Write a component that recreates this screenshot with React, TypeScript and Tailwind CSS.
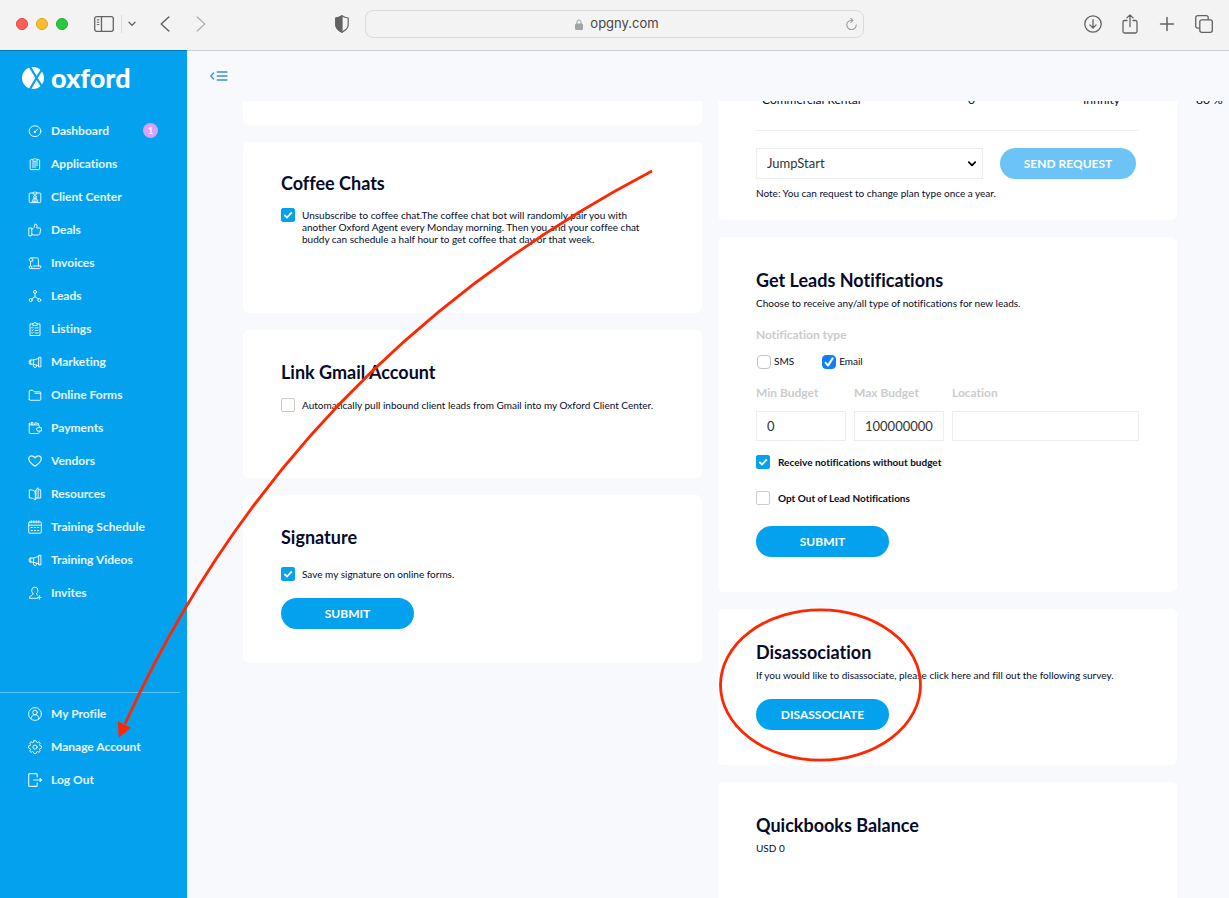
import type { ReactNode } from "react";

const navItems: { label: string; icon: ReactNode; badge?: number }[] = [
  {
    label: "Dashboard",
    badge: 1,
    icon: (
      <>
        <ellipse cx="7" cy="7.2" rx="5.9" ry="5.4" />
        <path d="M6.9 8 9.6 5.2" />
        <circle cx="6.8" cy="7.9" r=".7" fill="currentColor" />
      </>
    ),
  },
  {
    label: "Applications",
    icon: (
      <>
        <path d="M4.6 2.6H3.2a1 1 0 0 0-1 1v8a1 1 0 0 0 1 1h7.4a1 1 0 0 0 1-1v-8a1 1 0 0 0-1-1H9.4" />
        <path d="M4.8 3.9V2.3h1.1a1.1 1.1 0 0 1 2.1 0h1.2v1.6z" />
        <path d="M4.3 6h5.4M4.3 8h5.4M4.3 10h3.6" />
      </>
    ),
  },
  {
    label: "Client Center",
    icon: (
      <>
        <path d="M5 3H2.2a1 1 0 0 0-1 1v7.6a1 1 0 0 0 1 1h9.6a1 1 0 0 0 1-1V4a1 1 0 0 0-1-1H9" />
        <path d="M5.2 3.8V2.4h.9a1 1 0 0 1 1.8 0h.9v1.4z" />
        <circle cx="7" cy="6.9" r="1.4" />
        <path d="M4.2 11.3c.1-1.8 1.2-2.8 2.8-2.8s2.700 1 2.800 2.800zM5.600 10h2.800" />
      </>
    ),
  },
  {
    label: "Deals",
    icon: (
      <>
        <path d="M1.200 5h2.600v7.800H1.200z" />
        <path d="M3.800 6.200c2-.6 3-2.400 3-5 1.500-.3 2.300.6 2.200 1.900L8.700 5h2.700c.9 0 1.500.7 1.300 1.600l-.9 4.100c-.2.9-.8 1.300-1.600 1.300H5.600l-1.800-.8" />
      </>
    ),
  },
  {
    label: "Invoices",
    icon: (
      <>
        <path d="M2.300 5.500a1.800 1.800 0 1 1 2.500-1.700v1.300H2.500v4.700" />
        <path d="M3.500 1.900h5.300c1 0 1.600.7 1.600 1.600V10" />
        <path d="M5 10h7.800v1c0 .9-.7 1.600-1.600 1.600H2.700A1.400 1.400 0 0 1 1.200 11c0-.8.6-1.300 1.300-1.300S3.800 10.200 3.800 11v1.500" />
      </>
    ),
  },
  {
    label: "Leads",
    icon: (
      <>
        <circle cx="7" cy="2.900" r="1.500" />
        <circle cx="2.700" cy="11.100" r="1.500" />
        <circle cx="11.300" cy="11.100" r="1.500" />
        <path d="M7 4.400v3.300M3.700 9.900 7 7.700l3.300 2.200" />
      </>
    ),
  },
  {
    label: "Listings",
    icon: (
      <>
        <path d="M5 1.900H2v11.600h10V1.900H9" />
        <path d="M4.800 3.100V1.500h1.100a1.100 1.100 0 0 1 2.200 0h1.100v1.600z" />
        <path d="m3.700 5.600.6.6 1-1.100M3.700 8.100l.6.6 1-1.100M3.700 10.700l.6.600 1-1.100M7.200 5.900h2.900M7.200 8.400h2.900M7.200 11h2.900" />
      </>
    ),
  },
  { label: "Marketing", icon: <Megaphone /> },
  {
    label: "Online Forms",
    icon: <path d="M1.200 11.300V3.200c0-.5.4-.9.900-.9h2.700l1.500 1.500h5.600c.5 0 .9.400.9.900v6.600c0 .6-.4 1-.9 1H2.100a.9.900 0 0 1-.9-1zM7 5.300h5.600" />,
  },
  {
    label: "Payments",
    icon: (
      <>
        <path d="M11.200 6V4.800a.9.900 0 0 0-.9-.9H2.100a.9.900 0 0 1 0-1.900M1.200 3v8.500c0 .6.400 1 .9 1h8.200c.5 0 .9-.4.9-1v-1" />
        <path d="M3.300 3.700V1.500h1.500v2.200M6.500 3.700l.7-2 3.300.9.200 1.100" />
        <path d="M12.900 6.600h-2.600a1.700 1.700 0 0 0 0 3.500h2.600z" />
      </>
    ),
  },
  {
    label: "Vendors",
    icon: <path strokeWidth="1.200" d="M7 12.300C3.500 9.900.7 7.700.7 4.800c0-1.800 1.400-3 3-3 1.400 0 2.500.8 3.300 2 .8-1.200 1.900-2 3.300-2 1.600 0 3 1.200 3 3 0 2.900-2.800 5.100-6.300 7.500z" />,
  },
  {
    label: "Resources",
    icon: (
      <>
        <path d="M7 12.600C5.400 11.300 3.600 11 1.300 11V2.800c2.300 0 4.100.4 5.700 1.700zM7 12.600l3-1.800M7 4.500l.9-.7" />
        <path d="M8 8.900V2.600L10.200.8v8.800L8 11M11.200 2.800h1.500V11h-2.500" />
      </>
    ),
  },
  {
    label: "Training Schedule",
    icon: (
      <>
        <rect x=".7" y="2" width="12.600" height="11.200" rx=".8" />
        <path d="M.7 5.200h12.600" />
        <path d="M3.300.7v2.200M5.800.7v2.200M8.200.7v2.200M10.700.7v2.200" />
        <path strokeLinecap="butt" strokeDasharray="2.200 1" d="M2.700 7.500h8.600M2.700 10.500h8.600" />
      </>
    ),
  },
  { label: "Training Videos", icon: <Megaphone /> },
  {
    label: "Invites",
    icon: (
      <>
        <path d="M5 7.500C3.900 6.500 3.700 5.300 3.700 4.300a3.100 3.100 0 0 1 6.200 0c0 1-.2 2.200-1.300 3.200" />
        <path d="M5 7.500c.1 1.500-1 1.800-2 2.200-1 .4-1.500 1.300-1.500 2.600h7.800M8.600 7.500c0 .9.400 1.400 1.100 1.700" />
        <path d="M11.300 9.600v3.600M9.500 11.400h3.600" />
      </>
    ),
  },
];

const accountItems: { label: string; icon: ReactNode }[] = [
  {
    label: "My Profile",
    icon: (
      <>
        <circle cx="7" cy="7" r="6.400" />
        <circle cx="7" cy="5.500" r="2.300" />
        <path d="M3 11.900c.1-2.600 1.600-4.100 4-4.100s3.900 1.500 4 4.100" />
      </>
    ),
  },
  {
    label: "Manage Account",
    icon: (
      <>
        <path d="M5.900.7h2.200l.4 1.500 1 .4 1.400-.8 1.400 1.400-.8 1.400.4 1 1.500.4v2.200l-1.500.4-.4 1 .8 1.400-1.400 1.400-1.400-.8-1 .4-.4 1.500H5.900l-.4-1.500-1-.4-1.400.8-1.400-1.400.8-1.400-.4-1L.6 8.200V6l1.500-.4.4-1-.8-1.400 1.400-1.400 1.400.8 1-.4z" />
        <circle cx="7" cy="7.100" r="2.100" />
      </>
    ),
  },
  {
    label: "Log Out",
    icon: <path strokeWidth="1.100" d="M9.200 4V1.600a1 1 0 0 0-1-1H1.700a1 1 0 0 0-1 1v10.800a1 1 0 0 0 1 1h6.500a1 1 0 0 0 1-1V10M5.500 7h8M12 5.500 13.600 7 12 8.500" />,
  },
];

function Megaphone() {
  return (
    <>
      <path d="M11 2.300h1.900v9.600H11z" />
      <path d="M11 3.300 5.600 5H2.200c-.6 0-1 .4-1 1v2.200c0 .6.400 1 1 1h3.400L11 10.900M5.600 5v4.200M2.700 5v4.200" />
      <path d="M5.400 9.300l.4 2.300c.1.600.6.900 1.200.8l.9-.2c.5-.1.700-.5.600-1l-.2-1.100" />
    </>
  );
}

function NavList({ items }: { items: { label: string; icon: ReactNode; badge?: number }[] }) {
  return (
    <ul>
      {items.map((item) => (
        <li key={item.label}>
          <a href="#" className="flex h-[33px] items-center pl-7 text-xs font-bold text-white/90">
            <svg viewBox="0 0 14 14" className="mr-[9px] size-3.5 overflow-visible" fill="none" stroke="currentColor" strokeWidth="1" strokeLinecap="round" strokeLinejoin="round">
              {item.icon}
            </svg>
            {item.label}
            {item.badge && (
              <span className="mr-[29px] ml-auto flex size-[15px] items-center justify-center rounded-full bg-[#dba2fb] text-[9px] font-bold text-white/90">
                {item.badge}
              </span>
            )}
          </a>
        </li>
      ))}
    </ul>
  );
}

function Tick({ id, label, checked = false, bold = false, gap = "gap-[7px]" }: { id: string; label: string; checked?: boolean; bold?: boolean; gap?: string }) {
  return (
    <div className={`flex items-start ${gap}`}>
      <span className="grid size-3.5 shrink-0">
        <input
          id={id}
          type="checkbox"
          defaultChecked={checked}
          className="peer col-start-1 row-start-1 size-3.5 appearance-none rounded-xs border border-[#cbcbcb] bg-white checked:border-[#04a2ee] checked:bg-[#04a2ee]"
        />
        <svg viewBox="0 0 14 14" className="pointer-events-none col-start-1 row-start-1 hidden size-3.5 peer-checked:block" fill="none" stroke="white" strokeWidth="1.800">
          <path d="M3.300 7 6 9.500l4.800-5.200" />
        </svg>
      </span>
      <label htmlFor={id} className={bold ? "pt-px text-[10px] leading-3 font-bold" : "pt-px text-[10px] leading-3"}>
        {label}
      </label>
    </div>
  );
}

function SystemTick({ id, label, checked = false }: { id: string; label: string; checked?: boolean }) {
  return (
    <div className="flex items-start gap-[3px]">
      <span className="grid size-3.5 shrink-0">
        <input
          id={id}
          type="checkbox"
          defaultChecked={checked}
          className="peer col-start-1 row-start-1 size-3.5 appearance-none rounded-[4px] border border-[#c4c4c4] bg-white checked:border-[#0f7dff] checked:bg-[#0f7dff]"
        />
        <svg viewBox="0 0 14 14" className="pointer-events-none col-start-1 row-start-1 hidden size-3.5 peer-checked:block" fill="none" stroke="white" strokeWidth="2" strokeLinecap="round" strokeLinejoin="round">
          <path d="M3.500 7.700 6 10.600l4.600-7.200" />
        </svg>
      </span>
      <label htmlFor={id} className="text-[10px] leading-3">{label}</label>
    </div>
  );
}

function PillButton({ children }: { children: ReactNode }) {
  return (
    <button type="button" className="block h-[31px] w-[133px] rounded-full bg-[#04a2ee] text-xs font-bold text-white">
      {children}
    </button>
  );
}

function Heading({ children }: { children: ReactNode }) {
  return <h2 className="text-lg leading-6 font-bold">{children}</h2>;
}

function Toolbar() {
  return (
    <header className="flex h-[50px] shrink-0 items-center bg-[#f3f3f3] pb-0.5 text-[#636363]">
      <div className="flex w-[365px] shrink-0 items-center pl-4">
        <div className="flex gap-2">
          <button type="button" aria-label="Close" className="size-3 rounded-full border border-[#e0443e] bg-[#ff5f57]" />
          <button type="button" aria-label="Minimize" className="size-3 rounded-full border border-[#dfa023] bg-[#febc2e]" />
          <button type="button" aria-label="Zoom" className="size-3 rounded-full border border-[#1dad2b] bg-[#28c840]" />
        </div>
        <button type="button" aria-label="Sidebar" className="ml-[26px]">
          <svg viewBox="0 0 20 16" className="h-4 w-5" fill="none" stroke="currentColor" strokeWidth="1.300">
            <rect x=".7" y=".7" width="18.600" height="14.600" rx="2" />
            <path d="M7.500.7v14.600" />
            <path strokeWidth="1" d="M2.800 3.800h2.600M2.800 6.200h2.600M2.800 8.600h2.600" />
          </svg>
        </button>
        <span className="ml-[7px] h-[18px] w-px bg-[#dedede]" />
        <button type="button" aria-label="Tab groups" className="ml-1.5">
          <svg viewBox="0 0 8 6" className="h-1.5 w-2" fill="none" stroke="currentColor" strokeWidth="1.300" strokeLinecap="round" strokeLinejoin="round">
            <path d="M1 1.200 4 4.400l3-3.200" />
          </svg>
        </button>
        <button type="button" aria-label="Back" className="ml-6">
          <svg viewBox="0 0 10 16" className="h-4 w-2.5" fill="none" stroke="currentColor" strokeWidth="1.500" strokeLinecap="round" strokeLinejoin="round">
            <path d="M8.800 1 1.200 8l7.600 7" />
          </svg>
        </button>
        <button type="button" aria-label="Forward" className="ml-[26px] text-[#b4b4b4]">
          <svg viewBox="0 0 10 16" className="h-4 w-2.5" fill="none" stroke="currentColor" strokeWidth="1.500" strokeLinecap="round" strokeLinejoin="round">
            <path d="M1.200 1l7.600 7-7.600 7" />
          </svg>
        </button>
        <button type="button" aria-label="Privacy report" className="mr-4 ml-auto">
          <svg viewBox="0 0 14 18" className="h-[18px] w-3.5" fill="none" stroke="currentColor" strokeWidth="1.200" strokeLinejoin="round">
            <path d="M7 .8c1.800 1.300 3.700 2 6.200 2.200v6.500c0 3.600-2.600 5.900-6.200 7.700C3.400 15.400.8 13.100.8 9.500V3C3.300 2.800 5.200 2.100 7 .8z" />
            <path fill="currentColor" d="M7 .8v16.400C3.400 15.400.8 13.100.8 9.500V3C3.300 2.800 5.200 2.100 7 .8z" />
          </svg>
        </button>
      </div>
      <div className="flex h-7 min-w-0 flex-1 items-center rounded-lg border border-[#dadada] px-1.5">
        <div className="flex flex-1 items-center justify-center gap-[7px] pl-4">
          <svg viewBox="0 0 8 11" className="h-[11px] w-2 text-[#a3a3a3]" fill="none" stroke="currentColor">
            <path d="M2 5V3a2 2 0 0 1 4 0v2" />
            <rect x=".5" y="5" width="7" height="5.500" rx=".6" fill="currentColor" />
          </svg>
          <span className="font-[Inter,sans-serif] text-[13px] text-[#474747]">opgny.com</span>
        </div>
        <button type="button" aria-label="Reload" className="text-[#9b9b9b]">
          <svg viewBox="0 0 11 12" className="h-3 w-[11px]" fill="none" stroke="currentColor" strokeWidth="1.100" strokeLinecap="round" strokeLinejoin="round">
            <path d="M10.200 6.700A4.700 4.700 0 1 1 5.500 2.300h1M4.900.5l2 1.900-2 1.900" />
          </svg>
        </button>
      </div>
      <div className="flex w-[365px] shrink-0 items-center justify-end gap-[19px] pr-4">
        <button type="button" aria-label="Downloads">
          <svg viewBox="0 0 18 18" className="size-[18px]" fill="none" stroke="currentColor" strokeWidth="1.300" strokeLinecap="round" strokeLinejoin="round">
            <circle cx="9" cy="9" r="8.200" />
            <path d="M9 4.700v8M5.900 9.900 9 13l3.100-3.100" />
          </svg>
        </button>
        <button type="button" aria-label="Share">
          <svg viewBox="0 0 18 20" className="h-5 w-[18px]" fill="none" stroke="currentColor" strokeWidth="1.300" strokeLinecap="round" strokeLinejoin="round">
            <path d="M6 6.500H3.500a1.500 1.500 0 0 0-1.500 1.500v9.500A1.500 1.500 0 0 0 3.500 19h11a1.500 1.500 0 0 0 1.500-1.500V8a1.500 1.500 0 0 0-1.500-1.500H12M9 12.500V1M5.900 3.900 9 .9l3.100 3" />
          </svg>
        </button>
        <button type="button" aria-label="New tab">
          <svg viewBox="0 0 18 18" className="size-[18px]" fill="none" stroke="currentColor" strokeWidth="1.500" strokeLinecap="round">
            <path d="M9 2.500v13M2.500 9h13" />
          </svg>
        </button>
        <button type="button" aria-label="Tab overview">
          <svg viewBox="0 0 18 18" className="size-[18px]" fill="none" stroke="currentColor" strokeWidth="1.300" strokeLinejoin="round">
            <rect x="4.800" y="4.800" width="12.500" height="12.500" rx="2" />
            <path d="M4.800 13.200H2.700a2 2 0 0 1-2-2V2.700a2 2 0 0 1 2-2h8.500a2 2 0 0 1 2 2v2.100" />
          </svg>
        </button>
      </div>
    </header>
  );
}

function Sidebar() {
  return (
    <aside className="flex w-[187px] shrink-0 flex-col border-t border-[#0479b8] bg-[#04a2ee]">
      <a href="#" className="flex h-[54px] items-center gap-[7px] pl-[22px] text-white">
        <svg viewBox="0 0 22 22" className="size-[22px]">
          <circle cx="11" cy="11" r="11" fill="white" />
          <path d="M7.500-1 14.500 11 21 21M7.500 23l7-12L21 1" fill="none" stroke="#04a2ee" strokeWidth="2.200" />
        </svg>
        <span className="text-[27px] leading-7 font-black">oxford</span>
      </a>
      <nav className="mt-[9px]">
        <NavList items={navItems} />
      </nav>
      <nav className="mt-auto pb-[102px]">
        <hr className="mr-[7px] mb-1 border-white/35" />
        <NavList items={accountItems} />
      </nav>
    </aside>
  );
}

const fieldLabel = "block text-xs leading-4 font-bold text-[#cccccc]";
const fieldInput = "mt-2.5 h-[30px] w-full border border-[#ededed] bg-white px-2.5 text-[13px] text-[#333333]";

export default function App() {
  return (
    <div className="relative flex h-screen flex-col overflow-hidden bg-[#f7f9fd] font-[Lato,sans-serif] text-[#060b28] [font-variant-ligatures:none]">
      <Toolbar />
      <div className="flex min-h-0 flex-1">
        <Sidebar />
        <div className="flex min-w-0 flex-1 flex-col border-t border-[#cdced1]">
          <div className="flex h-[50px] shrink-0 items-center pl-[23px]">
            <button type="button" aria-label="Collapse menu" className="text-[#3b8de6]">
              <svg viewBox="0 0 18 10" className="h-2.5 w-[18px]" fill="none" stroke="currentColor" strokeWidth="1.300" strokeLinecap="round" strokeLinejoin="round">
                <path d="M3.600 2 .8 5l2.800 3M7.200 1h9.800M7.200 5h9.800M7.200 9h9.800" />
              </svg>
            </button>
          </div>
          <main className="grid min-h-0 flex-1 grid-cols-2 gap-x-4 overflow-hidden pr-[52px] pl-14">
            <div className="flex min-w-0 flex-col gap-[17px]">
              <section className="h-6 shrink-0 rounded-b-md bg-white" />
              <section className="shrink-0 rounded-md bg-white px-[38px] pt-[29px] pb-[68px]">
                <Heading>Coffee Chats</Heading>
                <div className="mt-[13px] pr-5">
                  <Tick id="coffee" checked label="Unsubscribe to coffee chat.The coffee chat bot will randomly pair you with another Oxford Agent every Monday morning. Then you and your coffee chat buddy can schedule a half hour to get coffee that day or that week." />
                </div>
              </section>
              <section className="shrink-0 rounded-md bg-white px-[38px] pt-[30px] pb-[66px]">
                <Heading>Link Gmail Account</Heading>
                <div className="mt-3.5">
                  <Tick id="gmail" label="Automatically pull inbound client leads from Gmail into my Oxford Client Center." />
                </div>
              </section>
              <section className="shrink-0 rounded-md bg-white px-[38px] pt-[30px] pb-[34px]">
                <Heading>Signature</Heading>
                <div className="mt-[18px] mb-[17px]">
                  <Tick id="signature" checked label="Save my signature on online forms." />
                </div>
                <PillButton>SUBMIT</PillButton>
              </section>
            </div>

            <div className="flex min-w-0 flex-col gap-[17px]">
              <section className="shrink-0 rounded-b-md bg-white px-[38px] pb-[21px]">
                <table className="-mt-[9px] w-[480px] table-fixed text-xs leading-4">
                  <tbody>
                    <tr>
                      <td className="w-[212px] pl-1.5">Commercial Rental</td>
                      <td className="w-[115px]">0</td>
                      <td className="w-[113px]">Infinity</td>
                      <td>80 %</td>
                    </tr>
                  </tbody>
                </table>
                <hr className="mt-[22px] border-[#eeeeee]" />
                <div className="mt-[17px] flex gap-[17px]">
                  <div className="grid w-[227px]">
                    <select aria-label="Plan type" className="col-start-1 row-start-1 h-[31px] w-full appearance-none border border-[#ededed] bg-white pl-2.5 text-[13px] text-[#333333]">
                      <option>JumpStart</option>
                    </select>
                    <svg viewBox="0 0 10 8" className="pointer-events-none col-start-1 row-start-1 mr-1.5 h-2 w-2.5 self-center justify-self-end" fill="none" stroke="black" strokeWidth="1.800" strokeLinecap="round" strokeLinejoin="round">
                      <path d="M1.800 2.200 5 5.400l3.200-3.200" />
                    </svg>
                  </div>
                  <button type="button" className="h-[31px] w-[136px] rounded-full bg-[#6cc3f6] text-xs font-bold text-white">
                    SEND REQUEST
                  </button>
                </div>
                <p className="mt-2 text-[10px] leading-3">Note: You can request to change plan type once a year.</p>
              </section>

              <section className="shrink-0 rounded-md bg-white px-[38px] pt-[31px] pb-[35px]">
                <Heading>Get Leads Notifications</Heading>
                <p className="mt-[5px] text-[10px] leading-3">Choose to receive any/all type of notifications for new leads.</p>
                <fieldset className="mt-[18px]">
                  <legend className={fieldLabel}>Notification type</legend>
                  <div className="mt-3 flex gap-7 pl-px">
                    <SystemTick id="sms" label="SMS" />
                    <SystemTick id="email" label="Email" checked />
                  </div>
                </fieldset>
                <div className="mt-4 grid grid-cols-[90fr_90fr_187fr] gap-2">
                  <div className="min-w-0">
                    <label htmlFor="min" className={fieldLabel}>Min Budget</label>
                    <input id="min" defaultValue="0" className={fieldInput} />
                  </div>
                  <div className="min-w-0">
                    <label htmlFor="max" className={fieldLabel}>Max Budget</label>
                    <input id="max" defaultValue="100000000" className={fieldInput} />
                  </div>
                  <div className="min-w-0">
                    <label htmlFor="location" className={fieldLabel}>Location</label>
                    <input id="location" className={fieldInput} />
                  </div>
                </div>
                <div className="mt-3.5 mb-[21px] flex flex-col gap-[22px]">
                  <Tick id="nobudget" bold checked gap="gap-2" label="Receive notifications without budget" />
                  <Tick id="optout" bold gap="gap-2" label="Opt Out of Lead Notifications" />
                </div>
                <PillButton>SUBMIT</PillButton>
              </section>

              <section className="shrink-0 rounded-md bg-white px-[38px] pt-[31px] pb-[35px]">
                <Heading>Disassociation</Heading>
                <p className="mt-[5px] mb-[18px] text-[10px] leading-3">If you would like to disassociate, please click here and fill out the following survey.</p>
                <PillButton>DISASSOCIATE</PillButton>
              </section>

              <section className="flex-1 rounded-t-md bg-white px-[38px] pt-[31px]">
                <Heading>Quickbooks Balance</Heading>
                <p className="mt-[5px] text-[10px] leading-3">USD 0</p>
              </section>
            </div>
          </main>
        </div>
      </div>

      <svg viewBox="0 0 1229 898" className="pointer-events-none absolute top-0 left-0 h-[898px] w-[1229px]" fill="none" stroke="#ff2600" strokeWidth="2.800">
        <path d="M652 171Q290 361 125 724" />
        <path d="M118 721.500 131 727.700 118.700 737.800z" fill="#ff2600" stroke="none" />
        <ellipse cx="820.500" cy="685" rx="100" ry="75.200" />
      </svg>
    </div>
  );
}
